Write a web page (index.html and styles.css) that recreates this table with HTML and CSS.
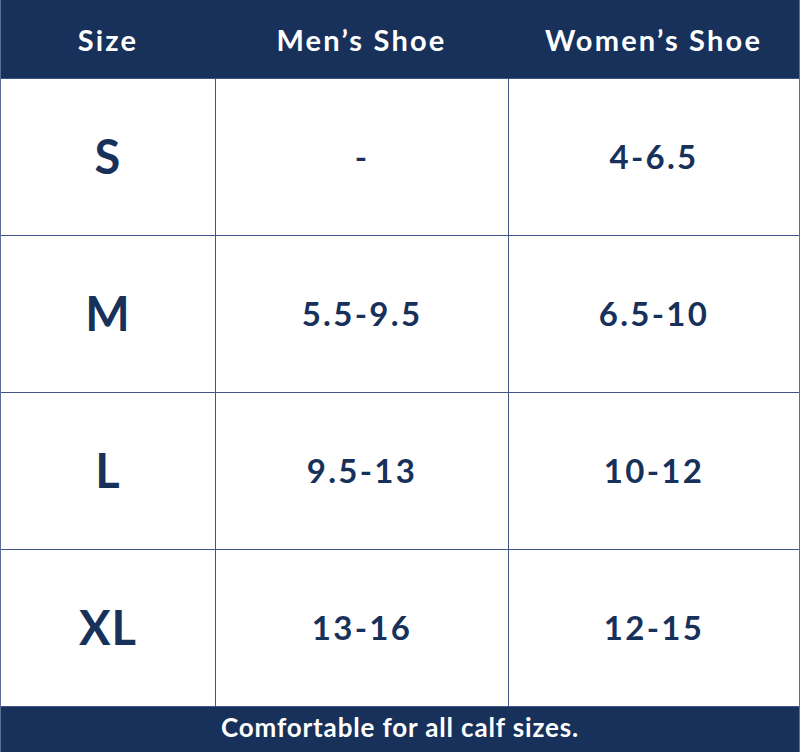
FILE: index.html
```html
<!DOCTYPE html>
<html>
<head>
<meta charset="utf-8">
<link rel="stylesheet" href="styles.css">
</head>
<body>
<div class="chart">
  <div class="head">
    <div class="hcell">Size</div>
    <div class="hcell">Men’s Shoe</div>
    <div class="hcell">Women’s Shoe</div>
  </div>
  <div class="grid">
    <div class="cell size">S</div><div class="cell num">-</div><div class="cell num">4-6.5</div>
    <div class="cell size">M</div><div class="cell num">5.5-9.5</div><div class="cell num">6.5-10</div>
    <div class="cell size">L</div><div class="cell num">9.5-13</div><div class="cell num">10-12</div>
    <div class="cell size">XL</div><div class="cell num">13-16</div><div class="cell num">12-15</div>
  </div>
  <div class="foot">Comfortable for all calf sizes.</div>
</div>
</body>
</html>
```
FILE: styles.css
```css
html, body { margin: 0; padding: 0; background: #ffffff; }
.chart {
  width: 800px;
  height: 752px;
  display: flex;
  flex-direction: column;
  font-family: "Lato", "Open Sans", sans-serif;
  color: #17315b;
  box-sizing: border-box;
  border-left: 1px solid #5a6f96;
  border-right: 1px solid #5a6f96;
}
.head {
  height: 78px;
  background: #17315b;
  display: grid;
  grid-template-columns: 214px 293px 1fr;
  align-items: center;
  border-bottom: 1px solid #3a5383;
}
.hcell {
  color: #ffffff;
  font-weight: 700;
  font-size: 29px;
  letter-spacing: 2.2px;
  text-align: center;
  padding-top: 1px;
}
.grid {
  display: grid;
  grid-template-columns: 214px 292px 1fr;
  grid-template-rows: repeat(4, 156px);
  gap: 1px;
  background: #3e5586;
  border-bottom: 1px solid #3e5586;
}
.cell {
  background: #ffffff;
  display: flex;
  align-items: center;
  justify-content: center;
  font-weight: 700;
  padding-bottom: 2px;
}
.size { font-size: 47px; letter-spacing: 1px; }
.num { font-size: 33px; letter-spacing: 2.3px; }
.foot {
  flex: 1;
  background: #17315b;
  color: #ffffff;
  font-weight: 700;
  font-size: 26px;
  letter-spacing: 0.85px;
  display: flex;
  align-items: center;
  justify-content: center;
  padding-bottom: 5px;
}
```
